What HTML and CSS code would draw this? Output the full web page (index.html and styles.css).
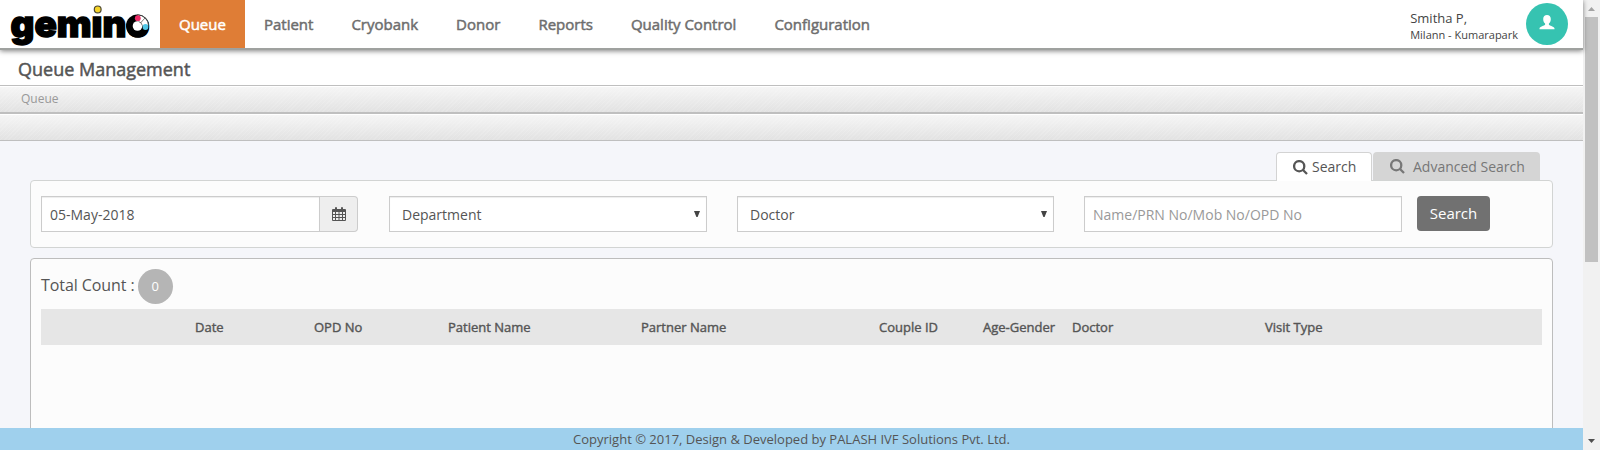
FILE: index.html
```html
<!DOCTYPE html>
<html lang="en">
<head>
<meta charset="utf-8">
<title>Queue Management</title>
<link rel="stylesheet" href="styles.css">
</head>
<body>
<div class="page">
  <header class="topbar">
    <svg class="logo" width="160" height="48" viewBox="0 0 160 48">
      <text class="logo-text" x="10.500" y="36.500" textLength="139" lengthAdjust="spacingAndGlyphs">gemıno</text>
      <circle cx="137.500" cy="26" r="11.500" fill="#000"/>
      <path d="M137.500 26V14.900A11.100 11.100 0 0 1 148.600 26Z" fill="#fff" stroke="#333" stroke-width=".9"/>
      <circle cx="137.500" cy="26" r="4.800" fill="#fff"/>
      <path d="M138.500 21.500a5 5 0 0 1 3.800 4M140.500 23l4.500-5" fill="none" stroke="#555" stroke-width=".8"/>
      <circle cx="97.700" cy="9.400" r="3.400" fill="#f5d327" stroke="#4b4630" stroke-width="1.200"/>
      <circle cx="137.800" cy="18.200" r="2.900" fill="#ed2a66"/>
      <circle cx="145.500" cy="27" r="2.900" fill="#4fc6e6"/>
    </svg>
    <nav class="nav">
      <a class="nav-item active">Queue</a>
      <a class="nav-item">Patient</a>
      <a class="nav-item">Cryobank</a>
      <a class="nav-item">Donor</a>
      <a class="nav-item">Reports</a>
      <a class="nav-item">Quality Control</a>
      <a class="nav-item">Configuration</a>
    </nav>
    <div class="user">
      <div class="user-name">Smitha P,</div>
      <div class="user-unit">Milann - Kumarapark</div>
    </div>
    <div class="avatar">
      <svg width="16" height="15" viewBox="0 0 16 15"><path fill="#fff" d="M8 0C5.800 0 4.200 1.400 4.200 3.900c0 2 .7 3.700 1.900 4.700v1.200C5.600 10.600.5 11.600.5 13.500V14.300h15v-.8c0-1.900-5.100-2.900-5.600-3.700V8.600c1.200-1 1.900-2.700 1.900-4.700C11.800 1.400 10.200 0 8 0Z"/></svg>
    </div>
  </header>
  <h1 class="title">Queue Management</h1>
  <div class="strip crumbs">Queue</div>
  <div class="strip toolbar"></div>
  <main class="content">
    <div class="tabs">
      <a class="tab current"><svg class="glass" viewBox="0 0 15 15"><circle cx="6.200" cy="6.200" r="5.100"/><path d="M10 10l4 4"/></svg><span>Search</span></a>
      <a class="tab other"><svg class="glass" viewBox="0 0 15 15"><circle cx="6.200" cy="6.200" r="5.100"/><path d="M10 10l4 4"/></svg><span>Advanced Search</span></a>
    </div>
    <section class="panel filters">
      <div class="date">
        <div class="field date-value">05-May-2018</div>
        <div class="addon"><svg width="14" height="15" viewBox="0 0 14 15"><path fill="#555" fill-rule="evenodd" d="M1 2h2V1q0-1 1-1t1 1v1h4V1q0-1 1-1t1 1v1h2q1 0 1 1v10q0 1-1 1H1q-1 0-1-1V3q0-1 1-1ZM1 5v2h2V5ZM4 5v2h2.500V5ZM7.500 5v2H10V5ZM11 5v2h2V5ZM1 8v2h2V8ZM4 8v2h2.500V8ZM7.500 8v2H10V8ZM11 8v2h2V8ZM1 11v2h2v-2ZM4 11v2h2.500v-2ZM7.500 11v2H10v-2ZM11 11v2h2v-2Z"/></svg></div>
      </div>
      <div class="field select">Department<svg class="caret" viewBox="0 0 6 6"><path d="M0 0h6L3.600 6H2.400Z"/></svg></div>
      <div class="field select doctor">Doctor<svg class="caret" viewBox="0 0 6 6"><path d="M0 0h6L3.600 6H2.400Z"/></svg></div>
      <div class="field hint">Name/PRN No/Mob No/OPD No</div>
      <div class="button">Search</div>
    </section>
    <section class="panel results">
      <div class="count"><span class="count-label">Total Count :</span><span class="badge">0</span></div>
      <div class="thead">
        <span></span><span>Date</span><span>OPD No</span><span>Patient Name</span><span>Partner Name</span><span>Couple ID</span><span>Age-Gender</span><span>Doctor</span><span>Visit Type</span>
      </div>
    </section>
  </main>
  <footer class="footer">Copyright © 2017, Design &amp; Developed by PALASH IVF Solutions Pvt. Ltd.</footer>
</div>
<div class="scrollbar">
  <svg class="arrow" viewBox="0 0 17 17"><path fill="#a3a3a3" d="M5 11l3.500-4L12 11Z"/></svg>
  <div class="thumb"></div>
  <svg class="arrow down" viewBox="0 0 17 17"><path fill="#505050" d="M5 6l3.500 4L12 6Z"/></svg>
</div>
</body>
</html>
```
FILE: styles.css
```css
* { box-sizing: border-box; }
body {
  margin: 0;
  width: 1600px;
  height: 450px;
  overflow: hidden;
  display: flex;
  font-family: "Open Sans", "Noto Sans", sans-serif;
  font-size: 14px;
  line-height: 20px;
  color: #555;
}
.page {
  width: 1583px;
  height: 450px;
  display: flex;
  flex-direction: column;
  background: #f5f6fa;
}
.topbar {
  height: 50px;
  flex: none;
  display: flex;
  background: #fff;
  border-bottom: 2px solid #9fa19f;
  box-shadow: 0 1px 5px rgba(0, 0, 0, .5);
  position: relative;
}
.logo { flex: none; }
.logo-text {
  font-family: Inter, "Open Sans", sans-serif;
  font-weight: 900;
  font-size: 37px;
  fill: #000;
  stroke: #000;
  stroke-width: 1.400px;
}
.nav { display: flex; }
.nav-item {
  padding: 0 19px;
  font-size: 15px;
  line-height: 49px;
  color: #6e6e6e;
  -webkit-text-stroke: .5px currentColor;
}
.nav-item.active { background: #df7d36; color: #fff; }
.user { margin-left: auto; margin-right: 8px; padding-top: 8px; color: #444; }
.user-name { font-size: 13px; line-height: 20px; }
.user-unit { font-size: 11px; line-height: 14px; }
.avatar {
  width: 42px;
  height: 42px;
  margin: 3px 15px 0 0;
  border-radius: 50%;
  background: #36c3b1;
  display: flex;
  justify-content: center;
  padding-top: 12px;
}
.title {
  margin: 0;
  height: 35px;
  padding-left: 18px;
  background: #fff;
  font-size: 18px;
  font-weight: 400;
  line-height: 39px;
  -webkit-text-stroke: .5px currentColor;
}
.strip {
  border-top: 1px solid #bfbfbf;
  border-bottom: 1px solid #bfbfbf;
  background:
    repeating-linear-gradient(135deg, rgba(255,255,255,.12) 0 1px, transparent 1px 3px),
    linear-gradient(#f6f6f6, #e2e2e2);
  box-shadow: inset 0 1px #fff;
}
.crumbs { height: 28px; padding-left: 21px; font-size: 12px; line-height: 26px; color: #999; }
.toolbar { height: 28px; }
.content { padding: 11px 30px 0; flex: 1; min-height: 0; }
.tabs { display: flex; justify-content: flex-end; gap: 1px; height: 29px; padding-right: 13px; position: relative; }
.tab {
  display: flex;
  align-items: center;
  border-radius: 4px 4px 0 0;
  line-height: 30px;
}
.tab.current { width: 96px; height: 29px; padding-left: 16px; gap: 4px; background: #fff; border: 1px solid #d3d3d3; border-bottom: 0; color: #555; }
.tab.other { width: 167px; height: 28px; padding: 1px 0 0 17px; gap: 8px; background: #d5d5d5; color: #777; }
.glass { width: 15px; height: 15px; fill: none; stroke: currentColor; stroke-width: 2.300; }
.panel { width: 1523px; border: 1px solid #d2d4d3; border-radius: 4px; background: #fcfcfc; }
.filters { height: 68px; margin-top: -1px; padding: 15px 10px 0; display: flex; }
.field {
  width: 318px;
  height: 36px;
  margin-right: 30px;
  padding: 0 8px;
  border: 1px solid #ccc;
  background: #fff;
  box-shadow: inset 0 1px 1px rgba(0, 0, 0, .075);
  line-height: 36px;
}
.date { width: 317px; margin-right: 31px; display: flex; }
.date-value { width: 279px; margin-right: 0; }
.addon {
  width: 38px;
  height: 36px;
  display: flex;
  align-items: center;
  justify-content: center;
  background: #eee;
  border: 1px solid #ccc;
  border-left: 0;
  border-radius: 0 4px 4px 0;
}
.select { display: flex; justify-content: space-between; padding: 0 6px 0 12px; }
.doctor { width: 317px; }
.caret { width: 6px; height: 6px; margin-top: 14px; fill: #444; }
.hint { color: #999; margin-right: 15px; }
.button {
  width: 73px;
  height: 35px;
  border-radius: 4px;
  background: #717171;
  color: #fff;
  text-align: center;
  font-size: 15px;
  line-height: 35px;
}
.results { margin-top: 10px; height: 200px; padding: 10px; border-color: #bdbdbd; }
.count { display: flex; gap: 3px; height: 35px; font-size: 16px; }
.count-label { line-height: 32px; letter-spacing: -.07px; }
.badge {
  width: 35px;
  height: 35px;
  border-radius: 50%;
  background: #b5b5b5;
  color: #fff;
  text-align: center;
  font-size: 13px;
  line-height: 35px;
}
.thead {
  height: 36px;
  margin-top: 5px;
  display: grid;
  grid-template-columns: 154px 119px 134px 193px 238px 104px 89px 193px 1fr;
  background: #e6e6e6;
  font-size: 13px;
  line-height: 37px;
  -webkit-text-stroke: .4px currentColor;
}
.footer {
  height: 22px;
  flex: none;
  position: relative;
  background: #9fd0ed;
  text-align: center;
  font-size: 13px;
  line-height: 23px;
}
.scrollbar {
  width: 17px;
  height: 450px;
  display: flex;
  flex-direction: column;
  align-items: center;
  background: #f1f1f1;
}
.arrow { width: 17px; height: 17px; flex: none; }
.thumb { width: 13px; height: 245px; background: #c1c1c1; }
.down { margin-top: auto; }
```
